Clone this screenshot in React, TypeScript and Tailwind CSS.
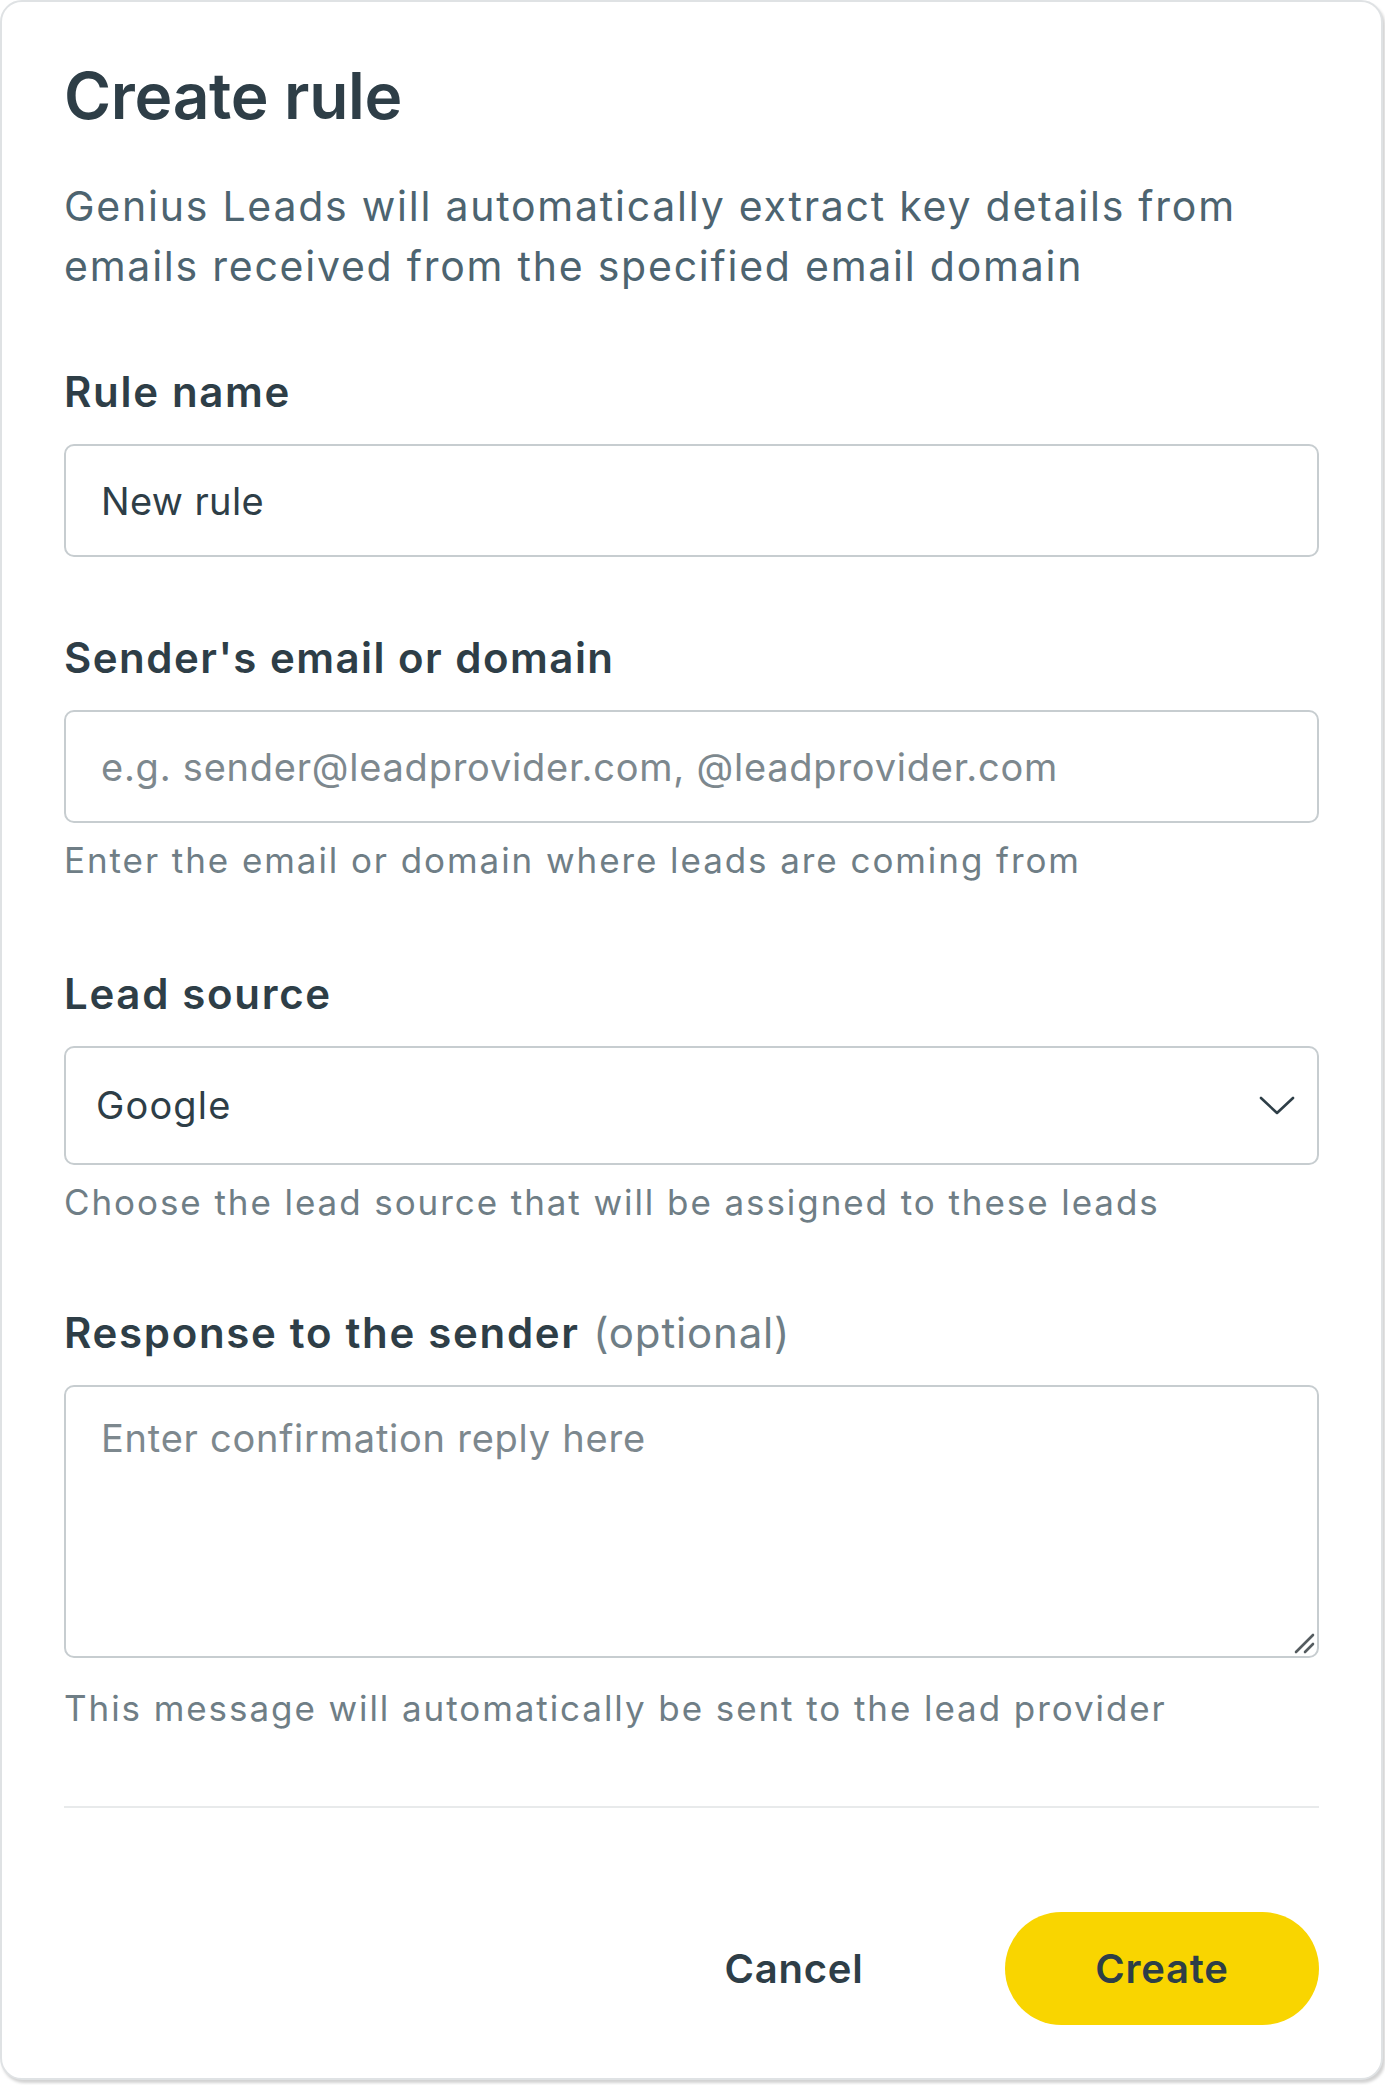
import { useState } from "react";

const font = { fontFamily: "Inter, 'Open Sans', sans-serif" };

const CreateRule = () => {
  const [name, setName] = useState("New rule");
  const [sender, setSender] = useState("");
  const [reply, setReply] = useState("");

  return (
    <div className="min-h-screen bg-white" style={font}>
      <div className="w-[1383px] h-[2080px] rounded-[22px] border-2 border-[#dfe2e4] bg-white shadow-[2px_3px_3px_rgba(0,0,0,0.18)] px-[62px] pt-[58px] flex flex-col">
        <h1 className="text-[64px] leading-[72px] font-semibold text-[#2e3e47] tracking-[-0.005em]">Create rule</h1>
        <p className="mt-[44px] text-[41px] leading-[60px] text-[#4d6470] tracking-[0.043em]">
          Genius Leads will automatically extract key details from emails received from the specified email domain
        </p>

        {/* Rule name */}
        <label className="mt-[68px] text-[42px] leading-[56px] font-semibold text-[#2e3e47] tracking-[0.04em]">Rule name</label>
        <input
          value={name}
          onChange={(e) => setName(e.target.value)}
          className="mt-[24px] h-[113px] w-full rounded-[10px] border-2 border-[#c7cdd0] px-[35px] text-[38px] tracking-[0.01em] text-[#2e3e47] outline-none"
        />

        {/* Sender */}
        <label className="mt-[73px] text-[42px] leading-[56px] font-semibold text-[#2e3e47] tracking-[0.035em]">Sender's email or domain</label>
        <input
          value={sender}
          onChange={(e) => setSender(e.target.value)}
          placeholder="e.g. sender@leadprovider.com, @leadprovider.com"
          className="mt-[24px] h-[113px] w-full rounded-[10px] border-2 border-[#c7cdd0] px-[35px] text-[38px] tracking-[0.02em] text-[#2e3e47] placeholder:text-[#7d888e] outline-none"
        />
        <p className="mt-[17px] text-[35px] leading-[40px] tracking-[0.055em] text-[#6f7e86]">
          Enter the email or domain where leads are coming from
        </p>

        {/* Lead source */}
        <label className="mt-[86px] text-[42px] leading-[56px] font-semibold text-[#2e3e47] tracking-[0.04em]">Lead source</label>
        <div className="mt-[24px] h-[119px] w-full rounded-[10px] border-2 border-[#c7cdd0] pl-[30px] pr-[22px] flex items-center justify-between">
          <span className="text-[38px] text-[#2e3e47] tracking-[0.03em]">Google</span>
          <svg width="36" height="20" viewBox="0 0 36 20" fill="none">
            <polyline points="2,2 18,17 34,2" stroke="#2e3e47" strokeWidth="2.6" strokeLinecap="round" strokeLinejoin="round" />
          </svg>
        </div>
        <p className="mt-[17px] text-[35px] leading-[40px] tracking-[0.055em] text-[#6f7e86]">
          Choose the lead source that will be assigned to these leads
        </p>

        {/* Response */}
        <label className="mt-[83px] text-[42px] leading-[56px] text-[#2e3e47] tracking-[0.04em]">
          <span className="font-semibold">Response to the sender</span>{" "}
          <span className="text-[#6f7e86] tracking-[0.02em]">(optional)</span>
        </label>
        <div className="relative mt-[24px]">
          <textarea
            value={reply}
            onChange={(e) => setReply(e.target.value)}
            placeholder="Enter confirmation reply here"
            className="block h-[273px] w-full resize-none rounded-[10px] border-2 border-[#c7cdd0] px-[35px] py-[26px] text-[38px] leading-[50px] tracking-[0.02em] text-[#2e3e47] placeholder:text-[#7d888e] outline-none"
          />
          <svg className="absolute right-[4px] bottom-[4px]" width="22" height="22" viewBox="0 0 22 22" fill="none">
            <line x1="3" y1="20" x2="20" y2="3" stroke="#555c60" strokeWidth="2.6" strokeLinecap="round" />
            <line x1="12" y1="20" x2="20" y2="12" stroke="#555c60" strokeWidth="2.6" strokeLinecap="round" />
          </svg>
        </div>
        <p className="mt-[30px] text-[35px] leading-[40px] tracking-[0.055em] text-[#6f7e86]">
          This message will automatically be sent to the lead provider
        </p>

        <div className="mt-[78px] h-[2px] bg-[#e8eaeb]" />

        <div className="mt-[104px] flex justify-end items-center gap-[54px]">
          <button className="w-[314px] h-[113px] rounded-full text-[40px] font-semibold tracking-[0.02em] text-[#2e3e47]">Cancel</button>
          <button className="w-[314px] h-[113px] rounded-full bg-[#f9d500] text-[40px] font-semibold tracking-[0.02em] text-[#2e3e47]">Create</button>
        </div>
      </div>
    </div>
  );
};

export default CreateRule;
